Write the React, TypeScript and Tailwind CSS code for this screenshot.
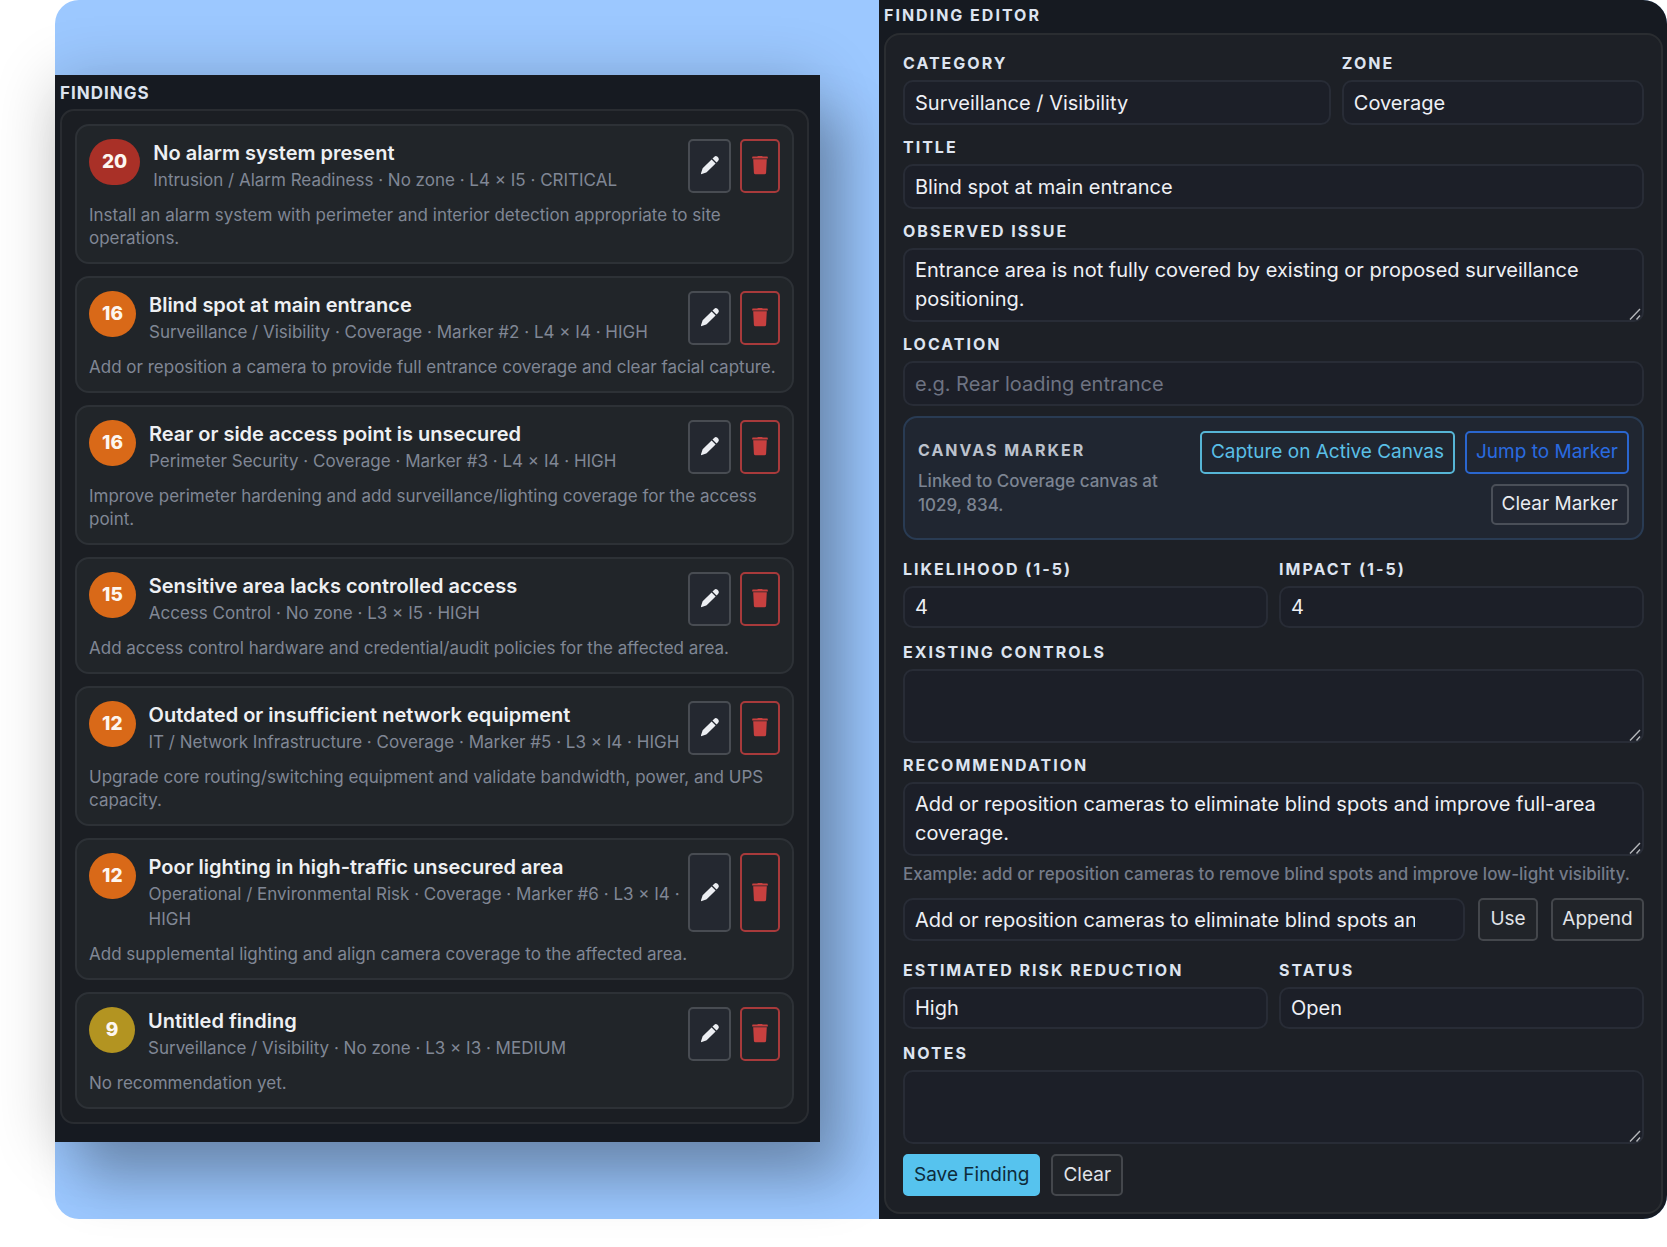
import type { ReactNode } from "react";

type Finding = {
  score: number;
  tone: string;
  title: string;
  meta: string;
  text: string;
};

const RED = "bg-[#a93027]";
const ORANGE = "bg-[#d96918]";
const YELLOW = "bg-[#b39421]";

const findings: Finding[] = [
  {
    score: 20,
    tone: RED,
    title: "No alarm system present",
    meta: "Intrusion / Alarm Readiness · No zone · L4 × I5 · CRITICAL",
    text: "Install an alarm system with perimeter and interior detection appropriate to site operations.",
  },
  {
    score: 16,
    tone: ORANGE,
    title: "Blind spot at main entrance",
    meta: "Surveillance / Visibility · Coverage · Marker #2 · L4 × I4 · HIGH",
    text: "Add or reposition a camera to provide full entrance coverage and clear facial capture.",
  },
  {
    score: 16,
    tone: ORANGE,
    title: "Rear or side access point is unsecured",
    meta: "Perimeter Security · Coverage · Marker #3 · L4 × I4 · HIGH",
    text: "Improve perimeter hardening and add surveillance/lighting coverage for the access point.",
  },
  {
    score: 15,
    tone: ORANGE,
    title: "Sensitive area lacks controlled access",
    meta: "Access Control · No zone · L3 × I5 · HIGH",
    text: "Add access control hardware and credential/audit policies for the affected area.",
  },
  {
    score: 12,
    tone: ORANGE,
    title: "Outdated or insufficient network equipment",
    meta: "IT / Network Infrastructure · Coverage · Marker #5 · L3 × I4 · HIGH",
    text: "Upgrade core routing/switching equipment and validate bandwidth, power, and UPS capacity.",
  },
  {
    score: 12,
    tone: ORANGE,
    title: "Poor lighting in high-traffic unsecured area",
    meta: "Operational / Environmental Risk · Coverage · Marker #6 · L3 × I4 · HIGH",
    text: "Add supplemental lighting and align camera coverage to the affected area.",
  },
  {
    score: 9,
    tone: YELLOW,
    title: "Untitled finding",
    meta: "Surveillance / Visibility · No zone · L3 × I3 · MEDIUM",
    text: "No recommendation yet.",
  },
];

function PencilIcon() {
  return (
    <svg viewBox="0 0 20 20" className="size-5" fill="currentColor" aria-hidden="true">
      <path d="M11.6 4.4 15.6 8.4 6.9 17.1Q6.6 17.4 6.2 17.6L1.8 19.1Q.9 19.3 1 18.3L2.4 13.9Q2.6 13.4 2.9 13.1Z" />
      <path d="M12.5 3.5 14.1 1.9Q15.7.5 17.2 1.6L18.4 2.8Q19.5 4.3 18.1 5.9L16.5 7.5Z" />
    </svg>
  );
}

function TrashIcon() {
  return (
    <svg viewBox="0 0 16 20" className="h-5 w-4" fill="currentColor" aria-hidden="true">
      <path d="M5.2 1.6 6 .9h4l.8.7h4.4c.4 0 .6.3.6.6v1.4H.2V2.2c0-.3.2-.6.6-.6z" />
      <path d="M1.2 4.2h13.6l-.7 13.5a1.7 1.7 0 0 1-1.7 1.6H3.6a1.7 1.7 0 0 1-1.7-1.6z" />
    </svg>
  );
}

function FindingCard({ item }: { item: Finding }) {
  return (
    <li className="rounded-[14px] border-2 border-[#2d3136] bg-[#212529] px-3 pt-[13px] pb-3">
      <div className="flex">
        <span
          className={`flex h-[46px] min-w-[46px] shrink-0 items-center justify-center rounded-full px-[13px] text-[19px] font-extrabold text-[#fdf6f0] ${item.tone}`}
        >
          {item.score}
        </span>
        <div className="ml-[13px] min-w-0 flex-1">
          <h3 className="text-[20px] leading-[29px] font-semibold text-[#eef0f3]">{item.title}</h3>
          <p className="text-[17px] leading-[25px] text-[#808795]">{item.meta}</p>
        </div>
        <div className="ml-1 flex shrink-0 gap-[9px]">
          <button
            type="button"
            aria-label={`Edit ${item.title}`}
            className="flex w-[43px] items-center justify-center rounded-[5px] border-2 border-[#484c52] bg-[#242830] pb-[2px] text-[#eceef2]"
          >
            <PencilIcon />
          </button>
          <button
            type="button"
            aria-label={`Delete ${item.title}`}
            className="flex w-10 items-center justify-center rounded-[5px] border-2 border-[#a83a3b] bg-[#212529] pb-[2px] text-[#c8403f]"
          >
            <TrashIcon />
          </button>
        </div>
      </div>
      <p className="mt-[11px] text-[17px] leading-[23px] text-[#808795]">{item.text}</p>
    </li>
  );
}

const LABEL = "mb-1 block text-[16px] leading-[25px] font-bold tracking-[2px] text-[#dde4f0] uppercase";
const CONTROL =
  "block w-full appearance-none rounded-[10px] border-2 border-[#282c36] bg-[#1c1f28] px-[10px] text-[20px] text-[#eef0f5] outline-none placeholder:text-[#6e7382]";
const BUTTON = "rounded-[5px] border-2 text-[19px]";

function Field({ id, label, children }: { id: string; label: string; children: ReactNode }) {
  return (
    <div className="min-w-0">
      <label htmlFor={id} className={LABEL}>
        {label}
      </label>
      {children}
    </div>
  );
}

function Select({ id, value, height }: { id: string; value: string; height: string }) {
  return (
    <select id={id} defaultValue={value} className={`${CONTROL} ${height}`}>
      <option>{value}</option>
    </select>
  );
}

function Area({ id, value = "" }: { id: string; value?: string }) {
  return (
    <div className="relative">
      <textarea
        id={id}
        defaultValue={value}
        className={`${CONTROL} h-[74px] resize-none overflow-hidden pt-[6px] pb-1 leading-[29px]`}
      />
      <svg
        viewBox="0 0 12 12"
        className="pointer-events-none absolute right-[3px] bottom-[2px] size-3"
        stroke="#b4b6ba"
        strokeWidth="1.4"
        aria-hidden="true"
      >
        <path d="M1 11.5 11 1M7.5 11.5l3.5-4" />
      </svg>
    </div>
  );
}

export default function App() {
  return (
    <div className="min-h-screen overflow-hidden bg-white pl-[55px] font-['Inter',sans-serif]">
      <div className="grid grid-cols-[minmax(0,824fr)_minmax(0,788fr)] rounded-[24px] bg-[#9cc8ff]">
        <div className="pt-[75px] pr-[59px]">
          <section className="bg-[#161a21] pt-2 pr-[11px] pb-[18px] pl-[5px] shadow-[28px_42px_50px_rgba(0,0,0,0.22),0_4px_60px_rgba(0,0,0,0.2)]">
            <h2 className="mb-[5px] text-[17px] leading-[21px] font-bold tracking-[1px] text-[#dde4f0] uppercase">
              Findings
            </h2>
            <ul className="flex flex-col gap-3 rounded-[14px] border-2 border-[#292c31] bg-[#1b1e23] p-[13px]">
              {findings.map((item) => (
                <FindingCard key={item.title} item={item} />
              ))}
            </ul>
          </section>
        </div>

        <section className="relative rounded-r-[24px] bg-[#161a21] pr-1 pb-[5px] pl-[5px]">
          <h2 className="pt-[5px] pb-[7px] text-[16px] leading-[21px] font-bold tracking-[2px] text-[#dde4f0] uppercase">
            Finding Editor
          </h2>
          <form
            className="rounded-[16px] border-2 border-[#2a2d31] bg-[#1d2026] px-[17px] py-4"
            onSubmit={(e) => e.preventDefault()}
          >
            <div className="mb-[10px] grid grid-cols-[429fr_303fr] gap-[11px]">
              <Field id="category" label="Category">
                <Select id="category" value="Surveillance / Visibility" height="h-[45px]" />
              </Field>
              <Field id="zone" label="Zone">
                <Select id="zone" value="Coverage" height="h-[45px]" />
              </Field>
            </div>
            <div className="mb-[10px] flex flex-col gap-[10px]">
              <Field id="title" label="Title">
                <input id="title" defaultValue="Blind spot at main entrance" className={`${CONTROL} h-[45px]`} />
              </Field>
              <Field id="issue" label="Observed issue">
                <Area
                  id="issue"
                  value="Entrance area is not fully covered by existing or proposed surveillance positioning."
                />
              </Field>
              <Field id="location" label="Location">
                <input id="location" placeholder="e.g. Rear loading entrance" className={`${CONTROL} h-[45px]`} />
              </Field>
            </div>

            <div className="mb-[17px] flex items-center gap-5 rounded-[14px] border-2 border-[#293b53] bg-[#202631] p-[13px]">
              <div className="min-w-0 flex-1">
                <h3 className="mb-2 text-[16px] leading-[22px] font-bold tracking-[2px] text-[#bcc2cd] uppercase">
                  Canvas marker
                </h3>
                <p className="text-[17px] leading-6 font-medium text-[#7c8492]">
                  Linked to Coverage canvas at 1029, 834.
                </p>
              </div>
              <div className="flex basis-[440px] flex-wrap justify-end gap-[10px]">
                <button type="button" className={`${BUTTON} h-[43px] border-[#56b5d6] px-[9px] text-[#5abfe6]`}>
                  Capture on Active Canvas
                </button>
                <button type="button" className={`${BUTTON} h-[43px] border-[#2a66cf] px-[9px] text-[#2a6be0]`}>
                  Jump to Marker
                </button>
                <button
                  type="button"
                  className={`${BUTTON} h-[41px] border-[#4a4f58] bg-[#232833] px-[9px] text-[#e9ebf0]`}
                >
                  Clear Marker
                </button>
              </div>
            </div>

            <div className="mb-3 grid grid-cols-2 gap-[11px]">
              <Field id="likelihood" label="Likelihood (1-5)">
                <input id="likelihood" defaultValue="4" inputMode="numeric" className={`${CONTROL} h-[42px]`} />
              </Field>
              <Field id="impact" label="Impact (1-5)">
                <input id="impact" defaultValue="4" inputMode="numeric" className={`${CONTROL} h-[42px]`} />
              </Field>
            </div>
            <div className="flex flex-col gap-[10px]">
              <Field id="controls" label="Existing controls">
                <Area id="controls" />
              </Field>
              <Field id="recommendation" label="Recommendation">
                <Area
                  id="recommendation"
                  value="Add or reposition cameras to eliminate blind spots and improve full-area coverage."
                />
              </Field>
            </div>
            <p className="mt-[6px] text-[17px] leading-6 font-medium whitespace-nowrap text-[#747b89]">
              Example: add or reposition cameras to remove blind spots and improve low-light visibility.
            </p>
            <div className="mt-3 mb-[17px] flex">
              <select
                aria-label="Suggested recommendation"
                className={`${CONTROL} h-[43px] min-w-0 flex-1 pr-[48px]`}
              >
                <option>Add or reposition cameras to eliminate blind spots and improve full-area coverage.</option>
              </select>
              <button
                type="button"
                className={`${BUTTON} ml-[13px] w-[60px] border-[#44474c] bg-[#212429] text-[#e0e3e8]`}
              >
                Use
              </button>
              <button
                type="button"
                className={`${BUTTON} ml-[13px] w-[93px] border-[#44474c] bg-[#212429] text-[#e0e3e8]`}
              >
                Append
              </button>
            </div>
            <div className="mb-3 grid grid-cols-2 gap-[11px]">
              <Field id="reduction" label="Estimated risk reduction">
                <Select id="reduction" value="High" height="h-[42px]" />
              </Field>
              <Field id="status" label="Status">
                <Select id="status" value="Open" height="h-[42px]" />
              </Field>
            </div>
            <Field id="notes" label="Notes">
              <Area id="notes" />
            </Field>
            <div className="mt-[10px] flex gap-[11px]">
              <button type="submit" className={`${BUTTON} h-[42px] border-[#56c3ee] bg-[#56c3ee] px-[9px] text-[#0e2c3b]`}>
                Save Finding
              </button>
              <button
                type="button"
                className={`${BUTTON} h-[42px] border-[#44474c] bg-[#212429] px-[10px] text-[#e0e3e8]`}
              >
                Clear
              </button>
            </div>
          </form>
        </section>
      </div>
    </div>
  );
}
